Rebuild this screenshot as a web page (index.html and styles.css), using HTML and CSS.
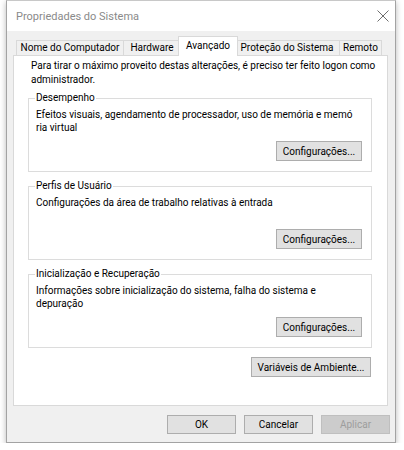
FILE: index.html
```html
<!DOCTYPE html>
<html lang="pt-BR">
<head>
<meta charset="utf-8">
<title>Propriedades do Sistema</title>
<link rel="stylesheet" href="styles.css">
</head>
<body>
<div class="window">
  <div class="titlebar">
    <span class="title">Propriedades do Sistema</span>
    <svg class="close" width="12" height="12" viewBox="0 0 12 12"><path d="M0.5 0.5 L11.5 11.5 M11.5 0.5 L0.5 11.5" stroke="#6e6e6e" stroke-width="1" fill="none"/></svg>
  </div>
  <div class="body">
    <div class="tabs">
      <div class="tab tab-nome">Nome do Computador</div>
      <div class="tab tab-hardware">Hardware</div>
      <div class="tab tab-avancado active">Avançado</div>
      <div class="tab tab-protecao">Proteção do Sistema</div>
      <div class="tab tab-remoto">Remoto</div>
    </div>
    <div class="panel">
      <p class="intro">Para tirar o máximo proveito destas alterações, é preciso ter feito logon como<br>administrador.</p>
      <fieldset class="group">
        <legend>Desempenho</legend>
        <div class="group-body">
          <p>Efeitos visuais, agendamento de processador, uso de memória e memó<br>ria virtual</p>
          <div class="actions"><button class="btn btn-config">Configurações...</button></div>
        </div>
      </fieldset>
      <fieldset class="group">
        <legend>Perfis de Usuário</legend>
        <div class="group-body">
          <p>Configurações da área de trabalho relativas à entrada</p>
          <div class="actions"><button class="btn btn-config">Configurações...</button></div>
        </div>
      </fieldset>
      <fieldset class="group">
        <legend>Inicialização e Recuperação</legend>
        <div class="group-body">
          <p>Informações sobre inicialização do sistema, falha do sistema e<br>depuração</p>
          <div class="actions"><button class="btn btn-config">Configurações...</button></div>
        </div>
      </fieldset>
      <div class="env"><button class="btn btn-env">Variáveis de Ambiente...</button></div>
    </div>
    <div class="footer">
      <button class="btn btn-dlg">OK</button>
      <button class="btn btn-dlg">Cancelar</button>
      <button class="btn btn-dlg" disabled>Aplicar</button>
    </div>
  </div>
</div>
</body>
</html>
```
FILE: styles.css
```css
html, body {
  margin: 0;
  padding: 0;
  background: #ffffff;
}
body {
  font-family: Roboto, "Liberation Sans", sans-serif;
  font-size: 10px;
  color: #000;
}
.window {
  box-sizing: border-box;
  width: 390px;
  height: 443px;
  margin-left: 6px;
  border: 1px solid #a3a3a3;
  border-top-color: #c8c8c8;
  background: #f0f0f0;
  box-shadow: 0 2px 6px rgba(0, 0, 0, 0.28);
  display: flex;
  flex-direction: column;
}
.titlebar {
  height: 30px;
  background: #ffffff;
  display: flex;
  align-items: center;
  justify-content: space-between;
  padding: 0 6px 0 9px;
  flex-shrink: 0;
}
.title {
  font-size: 11px;
  color: #8a8a8a;
}
.close {
  display: block;
}
.body {
  padding: 5px 7px 0 6px;
  flex: 1;
  display: flex;
  flex-direction: column;
}
.tabs {
  display: flex;
  align-items: flex-end;
  height: 19px;
  padding-left: 3px;
  position: relative;
  z-index: 1;
}
.tab {
  box-sizing: border-box;
  height: 15px;
  line-height: 14px;
  padding: 0;
  text-align: center;
  border: 1px solid #d9d9d9;
  border-bottom: none;
  margin-left: -1px;
  background: #f0f0f0;
  white-space: nowrap;
}
.tab:first-child {
  margin-left: 0;
}
.tab-nome { width: 108px; }
.tab-hardware { width: 58px; }
.tab-avancado { width: 60px; }
.tab-protecao { width: 106px; }
.tab-remoto { width: 43px; }
.tab.active {
  height: 20px;
  line-height: 17px;
  margin-bottom: -1px;
  margin-left: -3px;
  margin-right: -3px;
  background: #ffffff;
  position: relative;
  z-index: 2;
}
.panel {
  box-sizing: border-box;
  height: 351px;
  background: #ffffff;
  border: 1px solid #d9d9d9;
  padding: 3px 15px 0 14px;
}
.intro {
  margin: 0 0 4px 3px;
  line-height: 14px;
  white-space: nowrap;
}
.group {
  margin: 0 0 7px 0;
  padding: 0 9px 0 7px;
  border: 1px solid #dcdcdc;
  min-width: 0;
}
.group legend {
  padding: 0 1px;
  margin-left: -1px;
  line-height: 14px;
}
.group-body {
  box-sizing: border-box;
  height: 66px;
  padding: 3px 0 10px;
  display: flex;
  flex-direction: column;
}
.group-body p {
  margin: 0;
  line-height: 13px;
  white-space: nowrap;
}
.actions {
  margin-top: auto;
  display: flex;
  justify-content: flex-end;
}
.btn {
  box-sizing: border-box;
  height: 20px;
  font-family: inherit;
  font-size: 10px;
  color: #000;
  background: #e1e1e1;
  border: 1px solid #adadad;
  border-radius: 0;
  padding: 0;
  margin: 0;
}
.btn:disabled {
  background: #cccccc;
  border-color: #bfbfbf;
  color: #9d9d9d;
}
.btn-config {
  width: 86px;
}
.env {
  display: flex;
  justify-content: flex-end;
  margin-top: 9px;
  padding-right: 1px;
}
.btn-env {
  width: 120px;
}
.footer {
  display: flex;
  justify-content: flex-end;
  gap: 8px;
  padding: 9px 0 0;
  margin-right: -2px;
}
.btn-dlg {
  width: 69px;
  height: 19px;
}
```
